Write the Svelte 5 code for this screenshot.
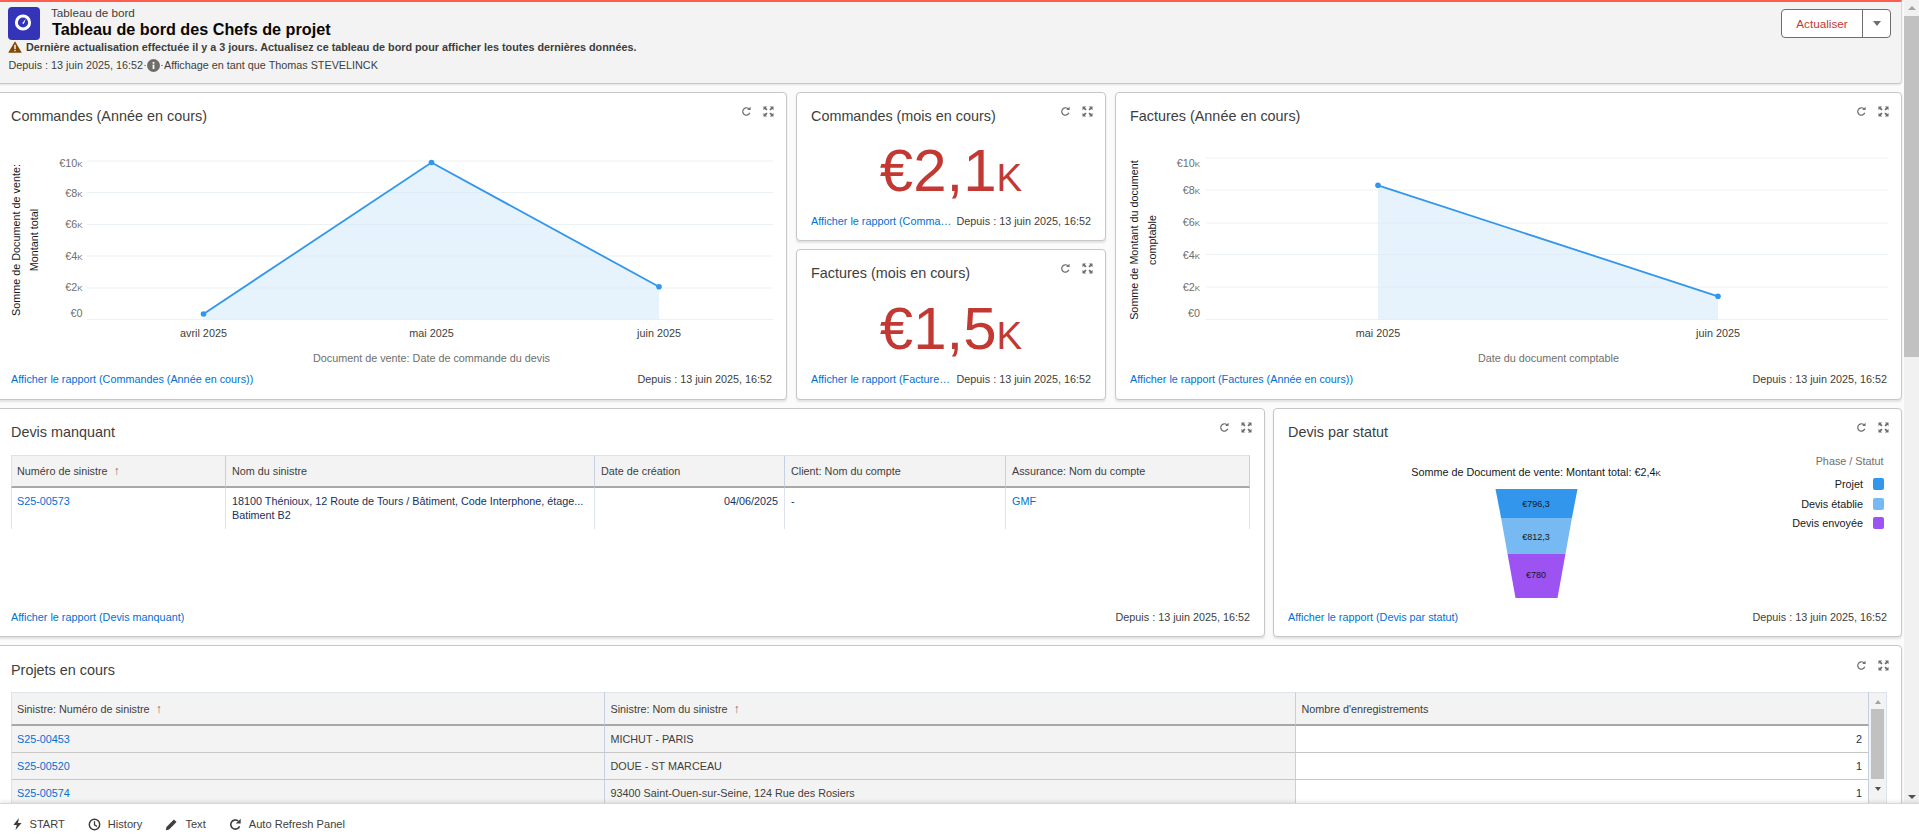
<script lang="ts">
  type ChartPoint = { x: number; y: number };

  const updated = 'Depuis : 13 juin 2025, 16:52';

  const ordersChart = {
    view: '11 126 761 246',
    left: 87,
    right: 773,
    grid: [161, 192.5, 224.5, 256, 288, 319.5],
    ticks: [
      { label: '€10k', y: 163 },
      { label: '€8k', y: 193 },
      { label: '€6k', y: 224 },
      { label: '€4k', y: 256 },
      { label: '€2k', y: 287 },
      { label: '€0', y: 313 },
    ],
    tickX: 82.5,
    points: [
      { x: 203.5, y: 314 },
      { x: 431.5, y: 162.5 },
      { x: 659, y: 286.7 },
    ],
    months: ['avril 2025', 'mai 2025', 'juin 2025'],
    axisX: 431.5,
    axisTitle: 'Document de vente: Date de commande du devis',
    yLines: [
      { text: 'Somme de Document de vente:', x: 16 },
      { text: 'Montant total', x: 34 },
    ],
  };

  const invoicesChart = {
    view: '1130 126 757 246',
    left: 1205.5,
    right: 1888,
    grid: [158, 190, 223, 254.5, 287, 319.5],
    ticks: [
      { label: '€10k', y: 163 },
      { label: '€8k', y: 190 },
      { label: '€6k', y: 222 },
      { label: '€4k', y: 255 },
      { label: '€2k', y: 287 },
      { label: '€0', y: 313 },
    ],
    tickX: 1200,
    points: [
      { x: 1378, y: 185.3 },
      { x: 1718, y: 296.3 },
    ],
    months: ['mai 2025', 'juin 2025'],
    axisX: 1548.5,
    axisTitle: 'Date du document comptable',
    yLines: [
      { text: 'Somme de Montant du document', x: 1134 },
      { text: 'comptable', x: 1152 },
    ],
  };

  const funnel = [
    { label: '€796,3', color: '#3296ed', y1: 489, y2: 518, top: 41, bottom: 35.4, textY: 503 },
    { label: '€812,3', color: '#77b9f2', y1: 518, y2: 553.7, top: 35.4, bottom: 29, textY: 536 },
    { label: '€780', color: '#9d53f2', y1: 553.7, y2: 598, top: 29, bottom: 21, textY: 574 },
  ];

  const legend = [
    { label: 'Projet', color: '#3296ed' },
    { label: 'Devis établie', color: '#77b9f2' },
    { label: 'Devis envoyée', color: '#9d53f2' },
  ];

  const projects = [
    { id: 'S25-00453', name: 'MICHUT - PARIS', count: 2 },
    { id: 'S25-00520', name: 'DOUE - ST MARCEAU', count: 1 },
    { id: 'S25-00574', name: '93400 Saint-Ouen-sur-Seine, 124 Rue des Rosiers', count: 1 },
  ];

  function linePath(points: ChartPoint[]): string {
    return points.map((p, i) => `${i ? 'L' : 'M'} ${p.x} ${p.y}`).join(' ');
  }

  function areaPath(points: ChartPoint[], base: number): string {
    const last = points[points.length - 1];
    return `${linePath(points)} L ${last.x} ${base} L ${points[0].x} ${base} Z`;
  }
</script>

{#snippet cardTools()}
  <div class="tools">
    <svg class="tool" viewBox="0 0 12 12" aria-hidden="true">
      <path d="M9.6 7.4A4 4 0 1 1 8.6 3" fill="none" stroke="#706e6b" stroke-width="1.3" />
      <path d="M10.4 0.8V4.4H6.8Z" fill="#706e6b" />
    </svg>
    <svg class="tool" viewBox="0 0 12 12" aria-hidden="true">
      <path d="M0.5 0.5H4.5L3.2 1.8L5 3.6L3.6 5L1.8 3.2L0.5 4.5Z" fill="#706e6b" />
      <path d="M11.5 0.5H7.5L8.8 1.8L7 3.6L8.4 5L10.2 3.2L11.5 4.5Z" fill="#706e6b" />
      <path d="M0.5 11.5H4.5L3.2 10.2L5 8.4L3.6 7L1.8 8.8L0.5 7.5Z" fill="#706e6b" />
      <path d="M11.5 11.5H7.5L8.8 10.2L7 8.4L8.4 7L10.2 8.8L11.5 7.5Z" fill="#706e6b" />
    </svg>
  </div>
{/snippet}

{#snippet cardHead(title: string)}
  <div class="card-head">
    <h2>{title}</h2>
    {@render cardTools()}
  </div>
{/snippet}

{#snippet cardFoot(link: string)}
  <div class="card-foot">
    <a href="#report" class="report">{link}</a>
    <span class="since">{updated}</span>
  </div>
{/snippet}

{#snippet lineChart(chart: typeof ordersChart)}
  <svg class="chart" viewBox={chart.view} aria-hidden="true">
    {#each chart.grid as y}
      <line class="grid" x1={chart.left} x2={chart.right} y1={y} y2={y} />
    {/each}
    <path class="area" d={areaPath(chart.points, 319.5)} />
    <path class="trend" d={linePath(chart.points)} />
    {#each chart.points as p}
      <circle class="dot" cx={p.x} cy={p.y} r="2.8" />
    {/each}
    {#each chart.ticks as tick}
      <text class="tick" x={chart.tickX} y={tick.y + 3.5}>{tick.label}</text>
    {/each}
    {#each chart.points as p, i}
      <text class="month" x={p.x} y="336.5">{chart.months[i]}</text>
    {/each}
    <text class="axis-title" x={chart.axisX} y="361.5">{chart.axisTitle}</text>
    {#each chart.yLines as line}
      <text class="y-title" transform={`translate(${line.x + 3.5} 240) rotate(-90)`}>{line.text}</text>
    {/each}
  </svg>
{/snippet}

<div class="screen">
  <div class="frame">
    <main class="view">
      <header class="page-head">
        <div class="head-main">
          <div class="title-row">
            <div class="logo">
              <svg viewBox="0 0 32 33" width="32" height="33" aria-hidden="true">
                <circle cx="15" cy="15.5" r="6.6" fill="none" stroke="#fff" stroke-width="3" />
                <path d="M18 11.4L15.8 17L14.2 16.2Z" fill="#fff" />
              </svg>
            </div>
            <div class="titles">
              <div class="crumb">Tableau de bord</div>
              <h1>Tableau de bord des Chefs de projet</h1>
            </div>
          </div>
          <div class="warn">
            <svg viewBox="0 0 14 12" width="14" height="12" aria-hidden="true">
              <path d="M7 0.3L13.8 11.7H0.2Z" fill="#844800" />
              <rect x="6.3" y="3.8" width="1.4" height="4.2" fill="#fff" />
              <rect x="6.3" y="8.8" width="1.4" height="1.4" fill="#fff" />
            </svg>
            <span>Dernière actualisation effectuée il y a 3 jours. Actualisez ce tableau de bord pour afficher les toutes dernières données.</span>
          </div>
          <div class="as-user">
            <span>{updated}</span>
            <svg viewBox="0 0 19 13" width="19" height="13" aria-hidden="true">
              <rect x="0" y="6" width="2" height="1" fill="#9b9a98" />
              <rect x="17" y="6" width="2" height="1" fill="#9b9a98" />
              <circle cx="9.5" cy="6.5" r="6.5" fill="#706e6b" />
              <rect x="8.6" y="5.6" width="1.8" height="4.4" fill="#fff" />
              <rect x="8.6" y="3" width="1.8" height="1.7" fill="#fff" />
            </svg>
            <span>Affichage en tant que Thomas STEVELINCK</span>
          </div>
        </div>
        <div class="refresh-group">
          <button type="button" class="refresh">Actualiser</button>
          <button type="button" class="caret" aria-label="Plus d'actions"><i></i></button>
        </div>
      </header>

      <section class="row row-one">
        <article class="card">
          {@render cardHead('Commandes (Année en cours)')}
          <div class="card-body">{@render lineChart(ordersChart)}</div>
          {@render cardFoot('Afficher le rapport (Commandes (Année en cours))')}
        </article>

        <div class="metrics">
          <article class="card metric">
            {@render cardHead('Commandes (mois en cours)')}
            <div class="big-number">€2,1<span class="unit">K</span></div>
            {@render cardFoot('Afficher le rapport (Commandes (mois en cours))')}
          </article>
          <article class="card metric">
            {@render cardHead('Factures (mois en cours)')}
            <div class="big-number">€1,5<span class="unit">K</span></div>
            {@render cardFoot('Afficher le rapport (Factures (mois en cours))')}
          </article>
        </div>

        <article class="card">
          {@render cardHead('Factures (Année en cours)')}
          <div class="card-body">{@render lineChart(invoicesChart)}</div>
          {@render cardFoot('Afficher le rapport (Factures (Année en cours))')}
        </article>
      </section>

      <section class="row row-two">
        <article class="card">
          {@render cardHead('Devis manquant')}
          <div class="card-body">
            <table class="table quotes">
              <thead>
                <tr>
                  <th>Numéro de sinistre <span class="sort">↑</span></th>
                  <th>Nom du sinistre</th>
                  <th>Date de création</th>
                  <th>Client: Nom du compte</th>
                  <th>Assurance: Nom du compte</th>
                </tr>
              </thead>
              <tbody>
                <tr>
                  <td><a href="#s25">S25-00573</a></td>
                  <td>18100 Thénioux, 12 Route de Tours / Bâtiment, Code Interphone, étage...<br />Batiment B2</td>
                  <td class="num">04/06/2025</td>
                  <td>-</td>
                  <td><a href="#gmf">GMF</a></td>
                </tr>
              </tbody>
            </table>
          </div>
          {@render cardFoot('Afficher le rapport (Devis manquant)')}
        </article>

        <article class="card">
          {@render cardHead('Devis par statut')}
          <div class="card-body funnel-body">
            <svg class="funnel" viewBox="1411 455 250 150" aria-hidden="true">
              <text class="funnel-title" x="1536" y="475.5">Somme de Document de vente: Montant total: €2,4<tspan class="k">k</tspan></text>
              {#each funnel as s}
                <path d={`M ${1536.5 - s.top} ${s.y1} H ${1536.5 + s.top} L ${1536.5 + s.bottom} ${s.y2} H ${1536.5 - s.bottom} Z`} fill={s.color} />
                <text class="funnel-value" x="1536" y={s.textY + 3.5}>{s.label}</text>
              {/each}
            </svg>
            <div class="legend">
              <div class="legend-title">Phase / Statut</div>
              {#each legend as item}
                <div class="legend-item">
                  <span>{item.label}</span>
                  <i style={`background:${item.color}`}></i>
                </div>
              {/each}
            </div>
          </div>
          {@render cardFoot('Afficher le rapport (Devis par statut)')}
        </article>
      </section>

      <section class="row-three">
        <article class="card">
          {@render cardHead('Projets en cours')}
          <div class="grid-wrap">
            <table class="table projects">
              <thead>
                <tr>
                  <th>Sinistre: Numéro de sinistre <span class="sort">↑</span></th>
                  <th>Sinistre: Nom du sinistre <span class="sort">↑</span></th>
                  <th>Nombre d'enregistrements</th>
                </tr>
              </thead>
              <tbody>
                {#each projects as p}
                  <tr>
                    <td class="group"><a href="#s25">{p.id}</a></td>
                    <td class="group">{p.name}</td>
                    <td class="num">{p.count}</td>
                  </tr>
                {/each}
              </tbody>
            </table>
            <div class="mini-scroll">
              <i class="up"></i>
              <b></b>
              <i class="down"></i>
            </div>
          </div>
        </article>
      </section>
    </main>

    <aside class="page-scroll" aria-hidden="true">
      <i class="up"></i>
      <b></b>
      <i class="down"></i>
    </aside>
  </div>

  <footer class="utility">
    <span>
      <svg viewBox="0 0 12 14" width="11" height="14" aria-hidden="true"><path d="M7.5 0.5L1.5 8H5.2L3.8 13.5L10.5 5.8H6.6Z" fill="#3e3e3c" /></svg>
      START
    </span>
    <span>
      <svg viewBox="0 0 14 14" width="13" height="13" aria-hidden="true">
        <circle cx="7" cy="7" r="5.6" fill="none" stroke="#3e3e3c" stroke-width="1.6" />
        <path d="M7 3.6V7.4L9.6 9" fill="none" stroke="#3e3e3c" stroke-width="1.4" />
      </svg>
      History
    </span>
    <span>
      <svg viewBox="0 0 14 14" width="13" height="13" aria-hidden="true"><path d="M0.8 13.2L1.6 9.6L9.6 1.6L12.4 4.4L4.4 12.4Z" fill="#3e3e3c" /></svg>
      Text
    </span>
    <span>
      <svg viewBox="0 0 14 14" width="13" height="13" aria-hidden="true">
        <path d="M11.4 8.8A4.9 4.9 0 1 1 9.8 3.2" fill="none" stroke="#3e3e3c" stroke-width="1.7" />
        <path d="M12.6 0.8V6H7.4Z" fill="#3e3e3c" />
      </svg>
      Auto Refresh Panel
    </span>
  </footer>
</div>

<style>
  :global(body) {
    margin: 0;
    background: #fff;
    font-family: "Liberation Sans", Arial, sans-serif;
    color: #3e3e3c;
  }
  .screen {
    display: flex;
    flex-direction: column;
    height: 839px;
    overflow: hidden;
  }
  .frame {
    display: flex;
    height: 803px;
    flex: none;
    overflow: hidden;
  }
  .view {
    flex: 1;
    min-width: 0;
    display: flex;
    flex-direction: column;
    gap: 8px;
    padding-right: 2px;
    margin-left: -4px;
    background: #fbfbfb;
  }
  .page-head {
    flex: none;
    height: 81px;
    display: flex;
    justify-content: space-between;
    border-top: 2px solid #ff5d4d;
    border-bottom: 1px solid #c9c7c5;
    border-right: 1px solid #d8d7d5;
    border-radius: 0 0 4px 0;
    background: #f3f3f3;
    box-shadow: 0 1px 2px rgb(0 0 0 / 10%);
    padding-left: 12px;
    box-sizing: content-box;
  }
  .head-main {
    padding-top: 5px;
  }
  .title-row {
    display: flex;
    gap: 11px;
    height: 33px;
  }
  .logo {
    flex: none;
    width: 32px;
    height: 33px;
    border-radius: 4px;
    background: #3434b8;
  }
  .logo svg { display: block; }
  .crumb {
    font-size: 11.7px;
    line-height: 12px;
    color: #3e3e3c;
  }
  h1 {
    margin: 0 0 0 1px;
    font-size: 16.2px;
    line-height: 20px;
    font-weight: 700;
    color: #080707;
  }
  .warn {
    display: flex;
    align-items: center;
    gap: 4px;
    height: 13px;
    font-size: 10.8px;
    font-weight: 700;
    color: #3e3e3c;
  }
  .as-user {
    display: flex;
    align-items: center;
    gap: 1px;
    margin-top: 4px;
    padding-left: 0.5px;
    height: 16px;
    font-size: 10.8px;
    color: #3e3e3c;
  }
  .refresh-group {
    display: flex;
    margin: 7px 10px 0 0;
    height: 29px;
    box-sizing: border-box;
    border: 1px solid #706e6b;
    border-radius: 4px;
    background: #fff;
  }
  .refresh-group button {
    border: 0;
    background: transparent;
    padding: 0;
    font: inherit;
  }
  .refresh {
    width: 80px;
    font-size: 11.7px !important;
    color: #c23934;
  }
  .caret {
    width: 28px;
    border-left: 1px solid #706e6b !important;
    display: flex;
    align-items: center;
    justify-content: center;
  }
  .caret i {
    width: 0;
    height: 0;
    border-left: 4.5px solid transparent;
    border-right: 4.5px solid transparent;
    border-top: 5px solid #706e6b;
  }
  .row {
    display: grid;
    gap: 9px;
    flex: none;
  }
  .row-one {
    grid-template-columns: 791px 310px 1fr;
    height: 308px;
  }
  .row-two {
    grid-template-columns: 1269px 1fr;
    gap: 8px;
    height: 229px;
  }
  .row-two .card { padding-bottom: 12px; }
  .row-three {
    flex: none;
  }
  .row-three .card { padding-top: 14px; }
  .metrics {
    display: grid;
    grid-template-rows: 149px 1fr;
    gap: 8px;
  }
  .card {
    display: flex;
    flex-direction: column;
    min-width: 0;
    min-height: 0;
    box-sizing: border-box;
    padding: 13px 14px 13px;
    border: 1px solid #c9c7c5;
    border-radius: 4px;
    background: #fff;
    box-shadow: 0 2px 2px rgb(0 0 0 / 10%);
  }
  .card.metric { padding-bottom: 12px; }
  .card.metric:last-child { padding-bottom: 13px; }
  .metric .card-foot { gap: 2px; }
  .card-head {
    flex: none;
    display: flex;
    justify-content: space-between;
    height: 20px;
  }
  h2 {
    margin: 0;
    font-size: 14.4px;
    line-height: 20px;
    font-weight: 400;
    color: #3e3e3c;
    white-space: nowrap;
  }
  .tools {
    display: flex;
    gap: 11px;
    margin-right: -2px;
  }
  .tool {
    width: 11px;
    height: 11px;
  }
  .card-body {
    flex: 1;
    min-height: 0;
    position: relative;
  }
  .card-foot {
    flex: none;
    display: flex;
    justify-content: space-between;
    gap: 7px;
    height: 14px;
    line-height: 14px;
    font-size: 10.8px;
  }
  .report {
    min-width: 0;
    overflow: hidden;
    white-space: nowrap;
    text-overflow: ellipsis;
    color: #0070d2;
    text-decoration: none;
  }
  .since {
    flex: none;
    color: #3e3e3c;
  }
  .chart {
    display: block;
    width: 100%;
    height: 100%;
    overflow: visible;
  }
  .chart text,
  .funnel text {
    font-family: "Liberation Sans", Arial, sans-serif;
  }
  .grid { stroke: #ecf1f6; stroke-width: 1; }
  .area { fill: #d9ebfa; opacity: .65; }
  .trend { fill: none; stroke: #3296ed; stroke-width: 1.8; }
  .dot { fill: #3296ed; }
  .tick {
    font-size: 10.8px;
    fill: #706e6b;
    text-anchor: end;
    font-variant: small-caps;
  }
  .month {
    font-size: 10.8px;
    fill: #3e3e3c;
    text-anchor: middle;
  }
  .axis-title {
    font-size: 10.8px;
    fill: #706e6b;
    text-anchor: middle;
  }
  .y-title {
    font-size: 10.8px;
    fill: #16181b;
    text-anchor: middle;
  }
  .big-number {
    flex: 1;
    min-height: 0;
    padding-top: 16px;
    text-align: center;
    font-size: 60px;
    line-height: 58px;
    color: #c23934;
  }
  .metric:last-child .big-number { padding-top: 17px; }
  .unit { font-size: 38.5px; }
  .table {
    width: 100%;
    border-collapse: separate;
    border-spacing: 0;
    table-layout: fixed;
    font-size: 10.8px;
    color: #16325c;
  }
  .table th {
    height: 33px;
    padding: 0 6px;
    box-sizing: border-box;
    background: #f3f3f3;
    border-top: 1px solid #dde3ec;
    border-bottom: 2px solid #a8a8a8;
    border-right: 1px solid #c5d1e0;
    font-weight: 400;
    color: #3e3e3c;
    text-align: left;
    white-space: nowrap;
  }
  .table th:first-child,
  .table td:first-child {
    border-left: 1px solid #dde3ec;
    padding-left: 5px;
  }
  .table td {
    padding: 0 6px;
    box-sizing: border-box;
    border-right: 1px solid #dde3ec;
    vertical-align: top;
  }
  .table a {
    color: #0070d2;
    text-decoration: none;
  }
  .sort {
    margin-left: 3px;
    font-size: 12px;
    color: #706e6b;
  }
  .num { text-align: right; }
  .quotes {
    margin: 13px 0 0;
  }
  .quotes th:nth-child(1) { width: 215px; }
  .quotes th:nth-child(2) { width: 369px; }
  .quotes th:nth-child(3) { width: 190px; }
  .quotes th:nth-child(4) { width: 221px; }
  .quotes td {
    height: 41px;
    padding-top: 6px;
    line-height: 14px;
  }
  .funnel-body {
    display: flex;
    justify-content: space-between;
  }
  .funnel {
    flex: none;
    width: 250px;
    height: 150px;
    margin: 13px 0 0 123px;
    overflow: visible;
  }
  .funnel-title {
    font-size: 10.8px;
    fill: #16181b;
    text-anchor: middle;
  }
  .k { font-variant: small-caps; }
  .funnel-value {
    font-size: 9px;
    fill: #16181b;
    text-anchor: middle;
  }
  .legend {
    display: flex;
    flex-direction: column;
    align-items: flex-end;
    padding: 12px 3.5px 0 0;
    font-size: 10.8px;
  }
  .legend-title {
    height: 20.2px;
    color: #706e6b;
    line-height: 14px;
  }
  .legend-item {
    display: flex;
    align-items: center;
    gap: 9.5px;
    height: 19.6px;
    color: #16181b;
  }
  .legend-item i {
    width: 11px;
    height: 12px;
    border-radius: 2px;
  }
  .grid-wrap {
    flex: none;
    display: flex;
    margin: 12px 0 0;
    border-right: 1px solid #dde3ec;
  }
  .projects th:nth-child(1) { width: 593.5px; }
  .projects th:nth-child(2) { width: 691px; }
  .projects th { height: 34px; }
  .projects td {
    height: 27px;
    vertical-align: middle;
    border-bottom: 1px solid #c9c7c5;
    border-right: 1px solid #c5d1e0;
  }
  .table .group {
    background: #f3f3f3;
    color: #3e3e3c;
  }
  .mini-scroll {
    flex: none;
    width: 17px;
    box-sizing: border-box;
    padding: 0 2px;
    display: flex;
    flex-direction: column;
    align-items: center;
    background: #f3f3f3;
    border-top: 1px solid #dde3ec;
  }
  .mini-scroll b {
    width: 13px;
    height: 70px;
    background: #c1c1c1;
    margin: 5px 0 8px;
  }
  .mini-scroll .up {
    margin-top: 7px;
    border-left: 3.5px solid transparent;
    border-right: 3.5px solid transparent;
    border-bottom: 4px solid #a3a3a3;
  }
  .mini-scroll .down {
    border-left: 3.5px solid transparent;
    border-right: 3.5px solid transparent;
    border-top: 4px solid #505050;
  }
  .page-scroll {
    flex: none;
    width: 15px;
    display: flex;
    flex-direction: column;
    align-items: center;
    background: #f1f1f1;
  }
  .page-scroll .up {
    margin-top: 6px;
    border-left: 4px solid transparent;
    border-right: 4px solid transparent;
    border-bottom: 4px solid #a3a3a3;
  }
  .page-scroll b {
    align-self: stretch;
    height: 341px;
    margin-top: 6px;
    background: #c1c1c1;
  }
  .page-scroll .down {
    margin-top: auto;
    margin-bottom: 4px;
    border-left: 4px solid transparent;
    border-right: 4px solid transparent;
    border-top: 4px solid #505050;
  }
  .utility {
    flex: none;
    height: 36px;
    display: flex;
    align-items: center;
    gap: 23px;
    box-sizing: border-box;
    padding: 5px 0 0 11.5px;
    border-top: 1px solid #d8d7d5;
    background: #fff;
    box-shadow: 0 -2px 3px rgb(0 0 0 / 8%);
    font-size: 11.1px;
    color: #3e3e3c;
    position: relative;
  }
  .utility span {
    display: inline-flex;
    align-items: center;
    gap: 7px;
  }
</style>
